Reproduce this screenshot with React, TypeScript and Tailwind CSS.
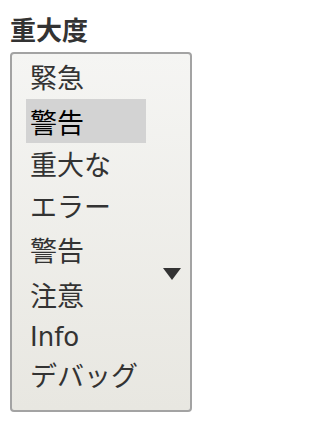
const options = [
  { label: '緊急', h: 'h-[45px]' },
  { label: '警告', h: 'h-[44px]', selected: true },
  { label: '重大な', h: 'h-[41px]' },
  { label: 'エラー', h: 'h-[43px]' },
  { label: '警告', h: 'h-[45px]' },
  { label: '注意', h: 'h-[44px]' },
  { label: 'Info', h: 'h-[42px]' },
  { label: 'デバッグ', h: 'h-[32px]' },
]

export default function App() {
  return (
    <div
      className="w-[200px] h-[424px] bg-white text-[#333]"
      style={{ fontFamily: '"DejaVu Sans", "Noto Sans CJK JP", sans-serif' }}
    >
      <div className="h-[52px] pl-[10px] pt-[16px]">
        <h3 className="text-[26px] font-bold leading-none" style={{ fontFamily: '"Noto Sans CJK JP", sans-serif' }}>
          重大度
        </h3>
      </div>
      <div className="relative ml-[10px] w-[182px] h-[360px] border-2 border-[#a3a3a3] rounded-[4px] bg-gradient-to-b from-[#f5f5f3] to-[#e8e7e1] pl-[14px]">
        <ul>
          {options.map((opt, i) => (
            <li
              key={i}
              className={`${opt.h} w-[120px] pl-[4px] flex items-center leading-none ${
                opt.label === 'Info' ? 'text-[26px]' : 'text-[27px]'
              } ${opt.selected ? 'bg-[#d3d3d3] text-black' : 'text-[#333]'}`}
              style={opt.label === 'Info' ? undefined : { fontFamily: '"Noto Sans CJK JP", sans-serif' }}
            >
              {opt.label}
            </li>
          ))}
        </ul>
        <svg className="absolute right-[9px] top-[214px]" width="18" height="12" viewBox="0 0 18 12">
          <path d="M0 0H18L9 12Z" fill="#333" />
        </svg>
      </div>
    </div>
  )
}
